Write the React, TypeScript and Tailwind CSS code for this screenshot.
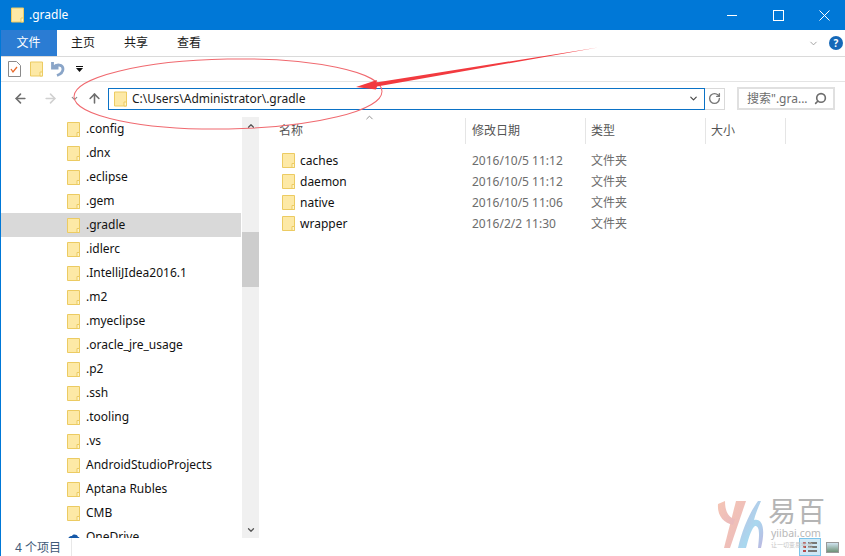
import { ArrowLeft, ArrowRight, ArrowUp, ChevronDown, ChevronUp, RotateCw, Search } from 'lucide-react'

const FONT = 'font-["Noto_Sans","Noto_Sans_CJK_SC",sans-serif]'

const NAV_ITEMS = [
  '.config', '.dnx', '.eclipse', '.gem', '.gradle', '.idlerc', '.IntelliJIdea2016.1', '.m2', '.myeclipse',
  '.oracle_jre_usage', '.p2', '.ssh', '.tooling', '.vs', 'AndroidStudioProjects', 'Aptana Rubles', 'CMB',
]

const FILES = [
  { name: 'caches', date: '2016/10/5 11:12' },
  { name: 'daemon', date: '2016/10/5 11:12' },
  { name: 'native', date: '2016/10/5 11:06' },
  { name: 'wrapper', date: '2016/2/2 11:30' },
]

function FolderIcon({ className = 'w-[13px] h-[15px]' }: { className?: string }) {
  return (
    <svg viewBox="0 0 13 15" className={className}>
      <path d="M.5.5h12v14H.5z" fill="#fde9a6" stroke="#eccb62" />
      <path d="M10 14.500v-4h2.500v4z" fill="#fff4c8" stroke="#eccb62" />
    </svg>
  )
}

function Overlays() {
  return (
    <>
      {/* 红色标注 */}
      <svg className="absolute inset-0 w-[845px] h-[556px] pointer-events-none" viewBox="0 0 845 556">
        <ellipse cx="227" cy="94" rx="154" ry="35" fill="none" stroke="#f0696f" strokeWidth="1" transform="rotate(-1 227 94)" />
        <path d="M355 87 L376 80 L375 82.500 L597 47.500 L376 86.500 L375 89.500 Z" fill="#f23a3f" />
      </svg>
      {/* 水印 */}
      <div className="absolute left-[715px] top-[497px] w-[130px] h-[59px] pointer-events-none">
        <svg viewBox="0 0 50 50" className="absolute left-0 top-0 w-[50px] h-[52px] blur-[0.5px]">
          <defs>
            <linearGradient id="lg" x1="0" y1="0" x2="1" y2="1">
              <stop offset="0" stopColor="#f6c6b4" />
              <stop offset="1" stopColor="#e9b9bd" />
            </linearGradient>
            <linearGradient id="lb" x1="0" y1="0" x2="1" y2="1">
              <stop offset="0" stopColor="#c4bbe0" />
              <stop offset="0.600" stopColor="#a9d8ef" />
              <stop offset="1" stopColor="#bdb6e0" />
            </linearGradient>
          </defs>
          <path d="M20 3 L30 3 L14 50 L8 50 Z" fill="url(#lg)" />
          <path d="M2 6 C1 18 8 25 17 27 L19 21 C13 20 9 14 9 3 Z" fill="url(#lg)" />
          <path d="M42 3 C34 14 26 32 22 50 L30 50 C33 38 36 30 39 28 C43 28 44 33 42 50 L45 50 C50 30 46 20 38 22 C40 14 43 8 45 3 Z" fill="url(#lb)" />
        </svg>
        <div className={`absolute left-[52px] top-[-2px] text-[28px] leading-[32px] tracking-[1px] text-[#b5b5b5] ${FONT}`}>易百</div>
        <div className={`absolute left-[55px] top-[29px] text-[10.5px] leading-[14px] text-[#b8b8b8] ${FONT}`}>yiibai.com</div>
        <div className={`absolute left-[55px] top-[44px] text-[6px] leading-[9px] text-[#c4c4c4] ${FONT}`}>让一切变易学会</div>
      </div>
    </>
  )
}

export default function App() {
  return (
    <div className={`relative w-[845px] h-[556px] overflow-hidden bg-white border-l border-[#0078d7] text-xs text-[#1a1a1a] ${FONT}`}>
      {/* 标题栏 */}
      <div className="h-[30px] bg-[#0078d7] flex items-center text-white -ml-px">
        <div className="pl-[11px] pr-[5px]">
          <FolderIcon className="w-[13px] h-[16px]" />
        </div>
        <span className="text-[12px]">.gradle</span>
        <div className="ml-auto flex items-center h-full -mr-[2px]">
          <div className="w-[46px] flex justify-center"><div className="w-[10px] h-px bg-white" /></div>
          <div className="w-[46px] flex justify-center"><div className="w-[11px] h-[11px] border border-white" /></div>
          <div className="w-[46px] flex justify-center">
            <svg viewBox="0 0 11 11" className="w-[11px] h-[11px]"><path d="M.5.5l10 10M10.500.5l-10 10" stroke="#fff" fill="none" /></svg>
          </div>
        </div>
      </div>

      {/* 功能区选项卡 */}
      <div className="h-[27px] flex items-center border-b border-[#dadada] -ml-px">
        <div className="w-[57px] h-full bg-[#2b7cd3] text-white flex items-center justify-center text-[12px]">文件</div>
        <div className="w-[52px] text-center text-[12px]">主页</div>
        <div className="w-[54px] text-center text-[12px]">共享</div>
        <div className="w-[52px] text-center text-[12px]">查看</div>
        <div className="ml-auto flex items-center gap-[10px] pr-[2px]">
          <ChevronDown className="w-[11px] h-[11px] text-[#9a9a9a]" />
          <div className="w-[14px] h-[14px] rounded-full bg-[#1568b8] text-white text-[10px] leading-[14px] text-center font-bold">?</div>
        </div>
      </div>

      {/* 快速访问工具栏 */}
      <div className="h-[25px] flex items-center border-b border-[#e4e4e4] pl-[7px]">
        <svg viewBox="0 0 13 16" className="w-[13px] h-[16px]">
          <path d="M.5.5h8l4 4v11H.5z" fill="#fff" stroke="#8a8a8a" />
          <path d="M3 8l2 3 4-5" stroke="#e8692a" strokeWidth="1.300" fill="none" />
        </svg>
        <FolderIcon className="w-[13px] h-[16px] ml-[9px]" />
        <svg viewBox="0 0 14 16" className="w-[14px] h-[16px] ml-[8px]">
          <path d="M1.500 1v6h6M2.500 6.500c3-4 9.500-3 9.500 1.500 0 3-2 5-6 6.500" stroke="#8aa5c8" strokeWidth="2.800" fill="none" />
        </svg>
        <svg viewBox="0 0 7 6" className="w-[7px] h-[6px] ml-[11px]"><path d="M0 0h7v1H0zM0 2h7L3.500 6z" fill="#111" /></svg>
      </div>

      {/* 地址栏 */}
      <div className="h-[33px] flex items-center">
        <div className="w-[107px] flex items-center pl-[12px] shrink-0">
          <ArrowLeft className="w-[15px] h-[15px] text-[#6e6e6e]" strokeWidth={2.500} />
          <ArrowRight className="w-[15px] h-[15px] text-[#d0d0d0] ml-[15px]" strokeWidth={2.500} />
          <ChevronDown className="w-[9px] h-[9px] text-[#8a8a8a] ml-[12px]" strokeWidth={3} />
          <ArrowUp className="w-[15px] h-[15px] text-[#6e6e6e] ml-[8px]" strokeWidth={2.500} />
        </div>
        <div className="w-[597px] h-[22px] border border-[#0b72c6] flex items-center pl-[5px] pr-[5px]">
          <FolderIcon className="w-[13px] h-[16px]" />
          <span className="ml-[5px] text-[12px]">C:\Users\Administrator\.gradle</span>
          <ChevronDown className="ml-auto w-[11px] h-[11px] text-[#444]" strokeWidth={2.500} />
        </div>
        <div className="w-[20px] h-[22px] border border-l-0 border-[#d9d9d9] flex items-center justify-center">
          <RotateCw className="w-[13px] h-[13px] text-[#777]" strokeWidth={2.500} />
        </div>
        <div className="ml-[12px] w-[98px] h-[23px] border-2 border-[#e0e0e0] flex items-center pl-[8px] pr-[6px] text-[#6d6d6d] text-[12px]">
          <span>搜索".gra...</span>
          <Search className="ml-auto w-[13px] h-[13px] -scale-x-100 text-[#6d6d6d]" strokeWidth={3} />
        </div>
      </div>

      {/* 主区域 */}
      <div className="h-[423px] flex">
        {/* 导航窗格 */}
        <div className="w-[240px] shrink-0 pt-[2px] overflow-hidden">
          {NAV_ITEMS.map((item) => (
            <div key={item} className={`h-[24px] flex items-center pl-[66px] ${item === '.gradle' ? 'bg-[#d9d9d9]' : ''}`}>
              <FolderIcon />
              <span className="ml-[6px] text-[12px] text-[#111]">{item}</span>
            </div>
          ))}
          <div className="h-[24px] flex items-center pl-[66px]">
            <svg viewBox="0 0 13 15" className="w-[13px] h-[15px]"><path d="M1 10c0-3 2-4 4-4 1-2 5-2 6 1 2 0 2 3 0 3z" fill="#1558a8" /></svg>
            <span className="ml-[6px] text-[12px] text-[#111]">OneDrive</span>
          </div>
        </div>
        {/* 滚动条 */}
        <div className="w-[17px] shrink-0 mt-[2px] h-[421px] bg-[#f0f0f0] flex flex-col ml-px">
          <div className="h-[17px] flex items-center justify-center">
            <ChevronUp className="w-[10px] h-[10px] text-[#555]" strokeWidth={3} />
          </div>
          <div className="h-[55px] mt-[98px] bg-[#cdcdcd]" />
          <div className="mt-auto h-[17px] flex items-center justify-center">
            <ChevronDown className="w-[10px] h-[10px] text-[#555]" strokeWidth={3} />
          </div>
        </div>

        {/* 文件列表 */}
        <div className="flex-1 pl-[20px] text-[12px]">
          <div className="relative h-[29px] flex items-center">
            <div className="absolute left-[85px] top-[-3px]">
              <ChevronUp className="w-[11px] h-[11px] text-[#888]" />
            </div>
            <div className="w-[187px] h-[26px] mt-[3px] flex items-center border-r border-[#e5e5e5] text-[#555]">名称</div>
            <div className="w-[120px] h-[26px] mt-[3px] flex items-center border-r border-[#e5e5e5] text-[#555] pl-[6px]">修改日期</div>
            <div className="w-[120px] h-[26px] mt-[3px] flex items-center border-r border-[#e5e5e5] text-[#555] pl-[5px]">类型</div>
            <div className="w-[80px] h-[26px] mt-[3px] flex items-center border-r border-[#e5e5e5] text-[#555] pl-[5px]">大小</div>
          </div>
          <div className="pt-[6px]">
            {FILES.map((file) => (
              <div key={file.name} className="h-[21px] flex items-center">
                <div className="w-[187px] flex items-center pl-[3px] shrink-0">
                  <FolderIcon />
                  <span className="ml-[5px] text-[#111]">{file.name}</span>
                </div>
                <div className="w-[120px] pl-[6px] text-[#6d6d6d] shrink-0">{file.date}</div>
                <div className="pl-[5px] text-[#6d6d6d]">文件夹</div>
              </div>
            ))}
          </div>
        </div>
      </div>

      {/* 状态栏 */}
      <div className="h-[18px] flex items-center pl-[14px] text-[12px] text-[#3f5a78]">
        <span className="pr-[10px] pt-[2px] border-r border-[#e8e8e8] h-full flex items-center">4 个项目</span>
        <div className="ml-auto flex items-center gap-[5px] pr-[6px]">
          <div className="w-[22px] h-[18px] border border-[#7cc4ea] bg-[#cfe8f6] flex flex-col justify-center gap-[2px] px-[3px]">
            <div className="h-[2px] bg-[linear-gradient(90deg,#b5494b_3px,transparent_3px,transparent_5px,#777_5px)]" />
            <div className="h-[2px] bg-[linear-gradient(90deg,#b5494b_3px,transparent_3px,transparent_5px,#777_5px)]" />
            <div className="h-[2px] bg-[linear-gradient(90deg,#b5494b_3px,transparent_3px,transparent_5px,#777_5px)]" />
          </div>
          <div className="w-[13px] h-[11px] border border-[#999] bg-[linear-gradient(#cfe3ef,#6f9277)]" />
        </div>
      </div>

      <Overlays />
    </div>
  )
}
